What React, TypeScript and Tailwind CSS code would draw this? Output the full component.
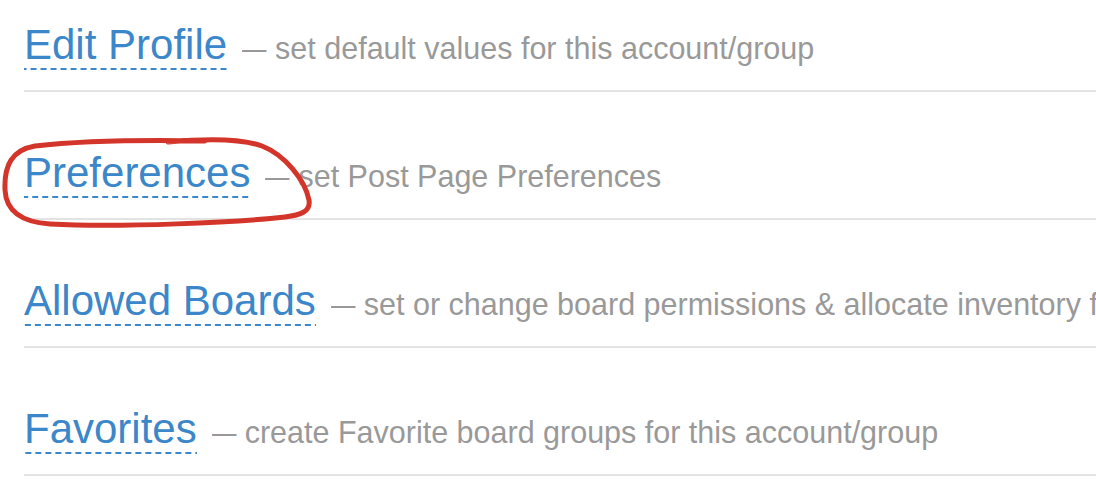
import React from "react";

const ROWS = [
  { label: "Edit Profile", desc: "set default values for this account/group" },
  { label: "Preferences", desc: "set Post Page Preferences" },
  { label: "Allowed Boards", desc: "set or change board permissions & allocate inventory for this account/group" },
  { label: "Favorites", desc: "create Favorite board groups for this account/group" },
];

export default function App() {
  return (
    <div className="relative w-[1096px] h-[498px] overflow-hidden bg-white pl-6 font-['Liberation_Sans',Arial,sans-serif]">
      <ul>
        {ROWS.map((row, i) => (
          <li
            key={row.label}
            className={`${i === 0 ? "pt-5" : "pt-[56px]"} pb-5 border-b-2 border-[#e3e3e3] whitespace-nowrap overflow-hidden text-[42px] leading-[50px]`}
          >
            <a
              href="#"
              className="text-[#3b87c9] pb-[2px] bg-[linear-gradient(to_right,#3b87c9_60%,transparent_60%)] bg-[length:10px_2px] bg-repeat-x bg-bottom"
            >
              {row.label}
            </a>
            <span className="text-[30.5px] leading-[30px] text-[#999999]">
              <span className="inline-block ml-[15px] mr-[-6px] origin-left scale-x-[0.8]">—</span>{" "}
              {row.desc}
            </span>
          </li>
        ))}
      </ul>

      {/* red hand-drawn annotation */}
      <svg className="pointer-events-none absolute left-0 top-0" width="1096" height="498" viewBox="0 0 1096 498">
        <path
          d="M168 142 C200 139 240 138 262 146 C285 155 305 180 309 200 C311 212 300 215 285 217 C240 222 120 228 50 224 C20 222 6 210 5 190 C4 165 12 150 35 146 C80 141 150 140 205 141"
          fill="none"
          stroke="#d3352a"
          strokeWidth="5"
          strokeLinecap="round"
          strokeLinejoin="round"
        />
      </svg>
    </div>
  );
}
